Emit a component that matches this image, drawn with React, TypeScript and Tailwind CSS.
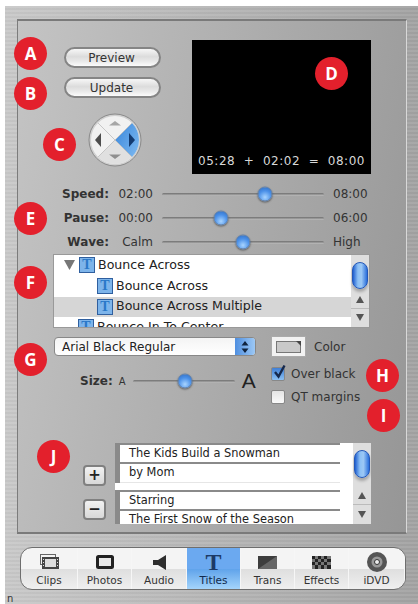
import { ReactNode } from 'react'

const font = "[font-family:'DejaVu_Sans','Noto_Sans',sans-serif]"

const Badge = ({ letter, className }: { letter: string; className: string }) => (
  <div className={`absolute flex h-[33px] w-[33px] items-center justify-center rounded-full bg-[#e3202c] text-[17px] font-bold text-white [font-family:'Open_Sans',sans-serif] ${className}`}>
    {letter}
  </div>
)

const Thumb = ({ left }: { left: number }) => (
  <div
    className="absolute top-1/2 h-[15px] w-[15px] -translate-x-1/2 -translate-y-1/2 rounded-full border border-[#5b7fae] bg-[radial-gradient(circle_at_50%_75%,#a8d4ff_0%,#4a90e8_55%,#2f6cc0_100%)] shadow-[0_1px_2px_rgba(0,0,0,0.45)]"
    style={{ left }}
  />
)

const Track = ({ width, thumb }: { width: number; thumb: number }) => (
  <div className="relative h-[15px] shrink-0" style={{ width }}>
    <div className="absolute inset-x-0 top-[6px] h-[3px] rounded-full bg-gradient-to-b from-[#6f6f6f] to-[#c0c0c0]" />
    <Thumb left={thumb} />
  </div>
)

const SliderRow = ({ label, start, end, thumb }: { label: string; start: string; end: string; thumb: number }) => (
  <div className="flex h-6 items-center text-[12px] text-[#333]">
    <span className="w-[91px] text-right font-bold">{label}</span>
    <span className="w-[44px] text-right">{start}</span>
    <div className="ml-[9px]"><Track width={162} thumb={thumb} /></div>
    <span className="ml-[9px]">{end}</span>
  </div>
)

const ScrollBar = () => (
  <div className="flex w-[18px] shrink-0 flex-col bg-[#dedede]">
    <div className="h-[7px]" />
    <div className="mx-[1px] h-[28px] rounded-full border border-[#2458b8] bg-[linear-gradient(90deg,#1f5fd0,#8cc0f5_35%,#9cc8f5_60%,#2a6fdc)] shadow-[0_3px_3px_rgba(0,0,0,0.25)]" />
    <div className="h-[2px]" />
    <div className="mt-auto flex h-[19px] items-center justify-center border-b border-[#bbb] text-[#555]">
      <svg width="8" height="7" viewBox="0 0 8 7"><path d="M4 0 8 7H0Z" fill="#555" /></svg>
    </div>
    <div className="flex h-[19px] items-center justify-center">
      <svg width="8" height="7" viewBox="0 0 8 7"><path d="M0 0H8L4 7Z" fill="#555" /></svg>
    </div>
  </div>
)

const TitleIcon = () => (
  <div className="flex h-4 w-4 shrink-0 items-center justify-center border border-[#2f5f9f] bg-[#7db4ea] text-[14px] font-bold leading-none text-[#2a78c8] [font-family:'Liberation_Serif',serif]">
    T
  </div>
)

const TreeRow = ({ indent, selected, arrow, children, height }: { indent: number; selected?: boolean; arrow?: boolean; children: ReactNode; height: number }) => (
  <div className={`flex shrink-0 items-center gap-[3px] pb-[1px] ${selected ? 'bg-[#d6d6d6]' : ''}`} style={{ paddingLeft: indent, height }}>
    {arrow && (
      <svg width="11" height="10" viewBox="0 0 11 10" className="mr-[1px]"><path d="M0 0H11L5.5 10Z" fill="#777" /></svg>
    )}
    <TitleIcon />
    <span>{children}</span>
  </div>
)

const Dpad = () => (
  <svg width="54" height="54" viewBox="0 0 54 54" className="shrink-0">
    <defs>
      <linearGradient id="dpadBlue" x1="0" y1="0" x2="1" y2="1">
        <stop offset="0" stopColor="#2f7fd8" />
        <stop offset="1" stopColor="#8cc4f5" />
      </linearGradient>
      <clipPath id="dpadClip"><circle cx="27" cy="27" r="24" /></clipPath>
    </defs>
    <circle cx="27" cy="27" r="26" fill="#d0d0d0" stroke="#8a8a8a" strokeWidth="1" />
    <g clipPath="url(#dpadClip)">
      <rect width="54" height="54" fill="#f1f1f1" />
      <path d="M27 27 3 51H51Z" fill="#e0e0e0" />
      <path d="M27 27 54 0V54Z" fill="url(#dpadBlue)" />
      <path d="M3 3 51 51M51 3 3 51" stroke="#bdbdbd" strokeWidth="0.8" />
    </g>
    <path d="M21 12.5 27 8 33 12.5Z" fill="#a6a6a6" />
    <path d="M21 41.5 33 41.5 27 46Z" fill="#8f8f8f" />
    <path d="M13 20V34L7 27Z" fill="#4d4d4d" />
    <path d="M41 20V34L47 27Z" fill="#123a70" />
  </svg>
)

const AquaButton = ({ children }: { children: ReactNode }) => (
  <div className="flex h-[21px] w-[97px] items-center justify-center rounded-full border-2 border-[#858585] bg-[linear-gradient(#f7f7f7,#dcdcdc_45%,#e8e8e8_70%,#fbfbfb)] pr-[2px] text-[12px] text-[#333]">
    {children}
  </div>
)

const SquareButton = ({ children }: { children: ReactNode }) => (
  <div className="flex h-[21px] w-[23px] items-center justify-center rounded-[4px] border-2 border-[#808080] bg-[linear-gradient(#f2f2f2,#d8d8d8)] text-[15px] font-bold leading-none text-[#222]">
    {children}
  </div>
)

const Check = ({ checked, label }: { checked?: boolean; label: string }) => (
  <div className="flex h-[23px] items-center gap-[6px] text-[12px] text-[#333]">
    <div className={`relative h-[14px] w-[14px] rounded-[2px] border border-[#888] ${checked ? 'bg-[linear-gradient(#3f7fd6,#8cc0f2)]' : 'bg-[linear-gradient(#e4e4e4,#fafafa)]'}`}>
      {checked && (
        <svg width="15" height="16" viewBox="0 0 15 16" className="absolute -top-[4px] left-0">
          <path d="M3 8 6.5 12.5 12.5 1.5" fill="none" stroke="#16294d" strokeWidth="2.4" />
        </svg>
      )}
    </div>
    <span>{label}</span>
  </div>
)

const TextGroup = ({ first, second }: { first: string; second: string }) => (
  <div className="flex shrink-0">
    <div className="w-[5px] bg-[#8a8a8a]" />
    <div className="w-[220px] border-t-2 border-[#8a8a8a]">
      <div className="flex h-[19px] items-center border-b-2 border-[#8a8a8a] bg-white pl-[9px]">{first}</div>
      <div className="flex h-[19px] items-center border-b border-[#e6e6e6] bg-white pl-[9px]">{second}</div>
    </div>
  </div>
)

const ClipsIcon = () => (
  <svg width="19" height="16" viewBox="0 0 19 16">
    <rect x="0.5" y="0.5" width="15" height="10" fill="none" stroke="#666" />
    <rect x="2" y="3" width="17" height="12" fill="#444" />
    <rect x="5" y="5" width="11" height="8" fill="#ddd" />
    <path d="M3 5h1v1H3zM3 8h1v1H3zM3 11h1v1H3zM17 5h1v1h-1zM17 8h1v1h-1zM17 11h1v1h-1z" fill="#ddd" />
  </svg>
)
const PhotosIcon = () => (
  <svg width="18" height="14" viewBox="0 0 18 14">
    <rect x="1.5" y="1.5" width="15" height="11" rx="1" fill="#e8e8e8" stroke="#222" strokeWidth="3" />
  </svg>
)
const AudioIcon = () => (
  <svg width="13" height="15" viewBox="0 0 13 15"><path d="M0 5H5L13 0V15L5 10H0Z" fill="#2e2e2e" /></svg>
)
const TransIcon = () => (
  <svg width="19" height="13" viewBox="0 0 19 13">
    <rect width="19" height="13" fill="#3d3d3d" />
    <path d="M19 0V13H0Z" fill="#666" />
  </svg>
)
const EffectsIcon = () => (
  <svg width="19" height="13" viewBox="0 0 19 13">
    <rect width="19" height="13" fill="#777" />
    <path d="M0 0h3v3H0zM6 0h3v3H6zM12 0h3v3h-3zM3 3h3v3H3zM9 3h3v3H9zM15 3h4v3h-4zM0 6h3v3H0zM6 6h3v3H6zM12 6h3v3h-3zM3 9h3v4H3zM9 9h3v4H9zM15 9h4v4h-4z" fill="#222" />
  </svg>
)
const DvdIcon = () => (
  <svg width="20" height="20" viewBox="0 0 20 20">
    <circle cx="10" cy="10" r="10" fill="#555" />
    <circle cx="10" cy="10" r="5.5" fill="#9a9a9a" />
    <circle cx="10" cy="10" r="2.5" fill="#eee" stroke="#333" strokeWidth="1" />
  </svg>
)

const tabs: { label: string; width: number; icon: ReactNode; active?: boolean }[] = [
  { label: 'Clips', width: 57, icon: <ClipsIcon /> },
  { label: 'Photos', width: 54, icon: <PhotosIcon /> },
  { label: 'Audio', width: 55, icon: <AudioIcon /> },
  { label: 'Titles', width: 54, active: true, icon: <span className="text-[24px] font-bold leading-[18px] text-[#1c3a66] [font-family:'Liberation_Serif',serif]">T</span> },
  { label: 'Trans', width: 54, icon: <TransIcon /> },
  { label: 'Effects', width: 54, icon: <EffectsIcon /> },
  { label: 'iDVD', width: 56, icon: <DvdIcon /> },
]

export default function App() {
  return (
    <div className={`relative h-[604px] w-[418px] overflow-hidden bg-white pl-[5px] pt-[6px] ${font}`}>
      <div className="h-[598px] bg-[repeating-linear-gradient(0deg,rgba(255,255,255,0.07)_0px,rgba(255,255,255,0.07)_2px,rgba(0,0,0,0.02)_2px,rgba(0,0,0,0.02)_4px),linear-gradient(90deg,#c8c8c8,#a2a2a2)] pl-[12px] pr-[11px] pt-[13px]">
        <div className="h-[515px] border-x border-y-2 border-x-[#7c7c7c] border-y-[#7a7a7a] border-r-[#d8d8d8] bg-[linear-gradient(100deg,#c4c4c4,#969696)] pt-[19px]">
          {/* preview + buttons */}
          <div className="flex">
            <div className="ml-[46px] flex w-[128px] flex-col pt-[7px]">
              <div className="flex flex-col gap-[9px] text-[12px]">
                <AquaButton>Preview</AquaButton>
                <AquaButton>Update</AquaButton>
              </div>
              <div className="ml-[24px] mt-[15px]"><Dpad /></div>
            </div>
            <div className="flex h-[134px] w-[179px] items-end justify-center whitespace-pre bg-black pb-[4px] text-[12px] tracking-[0.5px] text-[#d8d8d8]">
              05:28  +  02:02  =  08:00
            </div>
          </div>

          {/* sliders */}
          <div className="mt-[8px]">
            <SliderRow label="Speed:" start="02:00" end="08:00" thumb={103} />
            <SliderRow label="Pause:" start="00:00" end="06:00" thumb={59} />
            <SliderRow label="Wave:" start="Calm" end="High" thumb={81} />
          </div>

          {/* title list */}
          <div className="ml-[35px] flex h-[74px] w-[317px] overflow-hidden border border-[#999] bg-white text-[12.6px] text-[#222]">
            <div className="flex flex-1 flex-col">
              <TreeRow indent={10} arrow height={21}>Bounce Across</TreeRow>
              <TreeRow indent={43} height={21}>Bounce Across</TreeRow>
              <TreeRow indent={43} selected height={20}>Bounce Across Multiple</TreeRow>
              <TreeRow indent={24} height={21}>Bounce In To Center</TreeRow>
            </div>
            <ScrollBar />
          </div>

          {/* font options */}
          <div className="ml-[36px] mt-[9px] flex">
            <div className="w-[217px]">
              <div className="flex h-[19px] w-[202px] items-center overflow-hidden rounded-[4px] border border-[#888] bg-[linear-gradient(#f4f4f4,#fff)] pl-[7px] text-[12px] text-[#222]">
                <span className="flex-1">Arial Black Regular</span>
                <div className="flex h-full w-[20px] items-center justify-center bg-[linear-gradient(90deg,#4f8fe0,#9cc8f5)]">
                  <svg width="8" height="12" viewBox="0 0 8 12"><path d="M4 0 7.5 4.5H.5ZM4 12 .5 7.5H7.5Z" fill="#10243f" /></svg>
                </div>
              </div>
              <div className="ml-[26px] mt-[15px] flex items-center text-[#333]">
                <span className="text-[12px] font-bold">Size:</span>
                <span className="ml-[6px] w-[14px] text-[10px]">A</span>
                <Track width={102} thumb={52} />
                <span className="ml-[7px] text-[21px] leading-[20px] text-[#222] [font-family:'Liberation_Sans',sans-serif]">A</span>
              </div>
            </div>
            <div className="-mt-[1px]">
              <div className="flex items-center gap-[8px] text-[12px] text-[#333]">
                <div className="flex h-[21px] w-[35px] items-center justify-center border border-[#aaa] bg-[#f2f2f2]">
                  <div className="relative h-[12px] w-[25px] border border-[#777] bg-[#c9c9c9]">
                    <svg width="5" height="5" viewBox="0 0 5 5" className="absolute -right-px -top-px"><path d="M0 0H5V5Z" fill="#444" /></svg>
                  </div>
                </div>
                <span>Color</span>
              </div>
              <div className="mt-[5px]">
                <Check checked label="Over black" />
                <Check label="QT margins" />
              </div>
            </div>
          </div>

          {/* text fields + add/remove */}
          <div className="ml-[65px] mt-[35px] flex">
            <div className="flex w-[32px] flex-col gap-[13px] pt-[22px]">
              <SquareButton>+</SquareButton>
              <SquareButton>−</SquareButton>
            </div>
            <div className="flex h-[81px] w-[256px] overflow-hidden bg-white text-[11.4px] text-[#222]">
              <div className="flex flex-1 flex-col gap-[7px]">
                <TextGroup first="The Kids Build a Snowman" second="by Mom" />
                <TextGroup first="Starring" second="The First Snow of the Season" />
              </div>
              <ScrollBar />
            </div>
          </div>
        </div>

        {/* bottom tab bar */}
        <div className="ml-[3px] mt-[13px] flex h-[43px] w-[386px] overflow-hidden rounded-[12px] border border-[#6e6e6e] bg-[linear-gradient(#f4f4f4_50%,#dedede_50%,#efefef)]">
          {tabs.map(tab => (
            <div
              key={tab.label}
              className={`flex shrink-0 flex-col items-center border-r border-[#f6f6f6] pt-[5px] text-[10.5px] font-medium ${tab.active ? 'bg-[linear-gradient(#6ba9f0_50%,#5ea2ea_50%,#a4d4fb)] text-[#10294d]' : 'text-[#333]'}`}
              style={{ width: tab.width }}
            >
              <div className="flex h-[18px] items-center">{tab.icon}</div>
              <span className="mt-[2px]">{tab.label}</span>
            </div>
          ))}
        </div>
      </div>

      <span className="absolute left-[7px] top-[594px] text-[10px] leading-none text-[#333]">n</span>

      <Badge letter="A" className="left-[14px] top-[37px]" />
      <Badge letter="B" className="left-[14px] top-[77px]" />
      <Badge letter="C" className="left-[43px] top-[128px]" />
      <Badge letter="D" className="left-[315px] top-[57px]" />
      <Badge letter="E" className="left-[14px] top-[202px]" />
      <Badge letter="F" className="left-[14px] top-[266px]" />
      <Badge letter="G" className="left-[14px] top-[343px]" />
      <Badge letter="H" className="left-[366px] top-[359px]" />
      <Badge letter="I" className="left-[367px] top-[399px]" />
      <Badge letter="J" className="left-[37px] top-[440px]" />
    </div>
  )
}
